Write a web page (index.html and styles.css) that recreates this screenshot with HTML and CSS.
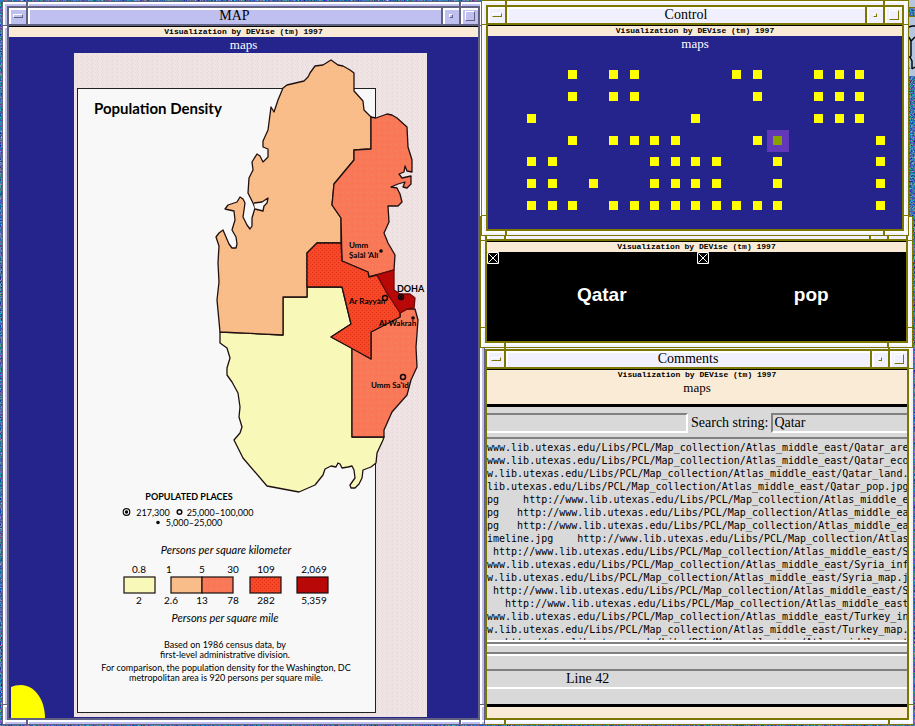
FILE: index.html
```html
<!DOCTYPE html>
<html lang="en">
<head>
<meta charset="utf-8">
<title>DEVise maps</title>
<link rel="stylesheet" href="styles.css">
</head>
<body>
<main class="desktop">
  <svg class="wallpaper" aria-hidden="true">
    <filter id="grain" x="0" y="0" width="100%" height="100%" color-interpolation-filters="sRGB">
      <feTurbulence type="fractalNoise" baseFrequency="0.7" numOctaves="2" seed="4"/>
      <feColorMatrix values="1.4 0 0 0 -0.45  0 1.2 0 0 -0.15  0 0 1 0 0.18  0 0 0 0 1"/>
    </filter>
    <rect width="100%" height="100%" filter="url(#grain)"/>
  </svg>
  <svg class="desk-icon" viewBox="0 0 7 76" aria-hidden="true">
    <path fill="#b4c6e0" d="M0 0h7v8H0zM0 17h7v59H0z"/>
    <path fill="#7b7700" d="M0 7h7v1H0zM0 16h7v1H0z"/>
    <path fill="none" stroke="#000" stroke-width="1.4" d="M1 27l3-1h3M1 37l2 4 4-4M3 41v15l-3 2M2 57l2 4v8M0 66l1 3M4 69l3-2"/>
  </svg>

  <section class="window window-comments">
    <header class="titlebar">
      <button class="tb-button" aria-label="Window menu"><span class="glyph glyph-menu"></span></button>
      <h2 class="title">Comments</h2>
      <button class="tb-button" aria-label="Minimize"><span class="glyph glyph-min"></span></button>
      <button class="tb-button" aria-label="Maximize"><span class="glyph glyph-max"></span></button>
    </header>
    <div class="body cream">
      <p class="banner">Visualization by DEVise (tm) 1997</p>
      <h3 class="view-name">maps</h3>
      <div class="browser">
        <form class="search">
          <input class="field field-left" type="text" aria-label="Location">
          <label for="find">Search string:</label>
          <input class="field field-find" id="find" type="text" value="Qatar">
        </form>
<pre class="listing">www.lib.utexas.edu/Libs/PCL/Map_collection/Atlas_middle_east/Qatar_are
www.lib.utexas.edu/Libs/PCL/Map_collection/Atlas_middle_east/Qatar_eco
w.lib.utexas.edu/Libs/PCL/Map_collection/Atlas_middle_east/Qatar_land.
lib.utexas.edu/Libs/PCL/Map_collection/Atlas_middle_east/Qatar_pop.jpg
pg    http://www.lib.utexas.edu/Libs/PCL/Map_collection/Atlas_middle_e
pg   http://www.lib.utexas.edu/Libs/PCL/Map_collection/Atlas_middle_ea
pg   http://www.lib.utexas.edu/Libs/PCL/Map_collection/Atlas_middle_ea
imeline.jpg    http://www.lib.utexas.edu/Libs/PCL/Map_collection/Atlas
 http://www.lib.utexas.edu/Libs/PCL/Map_collection/Atlas_middle_east/S
www.lib.utexas.edu/Libs/PCL/Map_collection/Atlas_middle_east/Syria_inf
w.lib.utexas.edu/Libs/PCL/Map_collection/Atlas_middle_east/Syria_map.j
 http://www.lib.utexas.edu/Libs/PCL/Map_collection/Atlas_middle_east/S
   http://www.lib.utexas.edu/Libs/PCL/Map_collection/Atlas_middle_east
www.lib.utexas.edu/Libs/PCL/Map_collection/Atlas_middle_east/Turkey_in
w.lib.utexas.edu/Libs/PCL/Map_collection/Atlas_middle_east/Turkey_map.
   http://www.lib.utexas.edu/Libs/PCL/Map_collection/Atlas_middle_east</pre>
        <div class="hscroll"></div>
        <p class="status">Line 42</p>
      </div>
    </div>
  </section>

  <section class="window window-map">
    <header class="titlebar">
      <button class="tb-button" aria-label="Window menu"><span class="glyph glyph-menu"></span></button>
      <h2 class="title">MAP</h2>
      <button class="tb-button" aria-label="Minimize"><span class="glyph glyph-min"></span></button>
      <button class="tb-button" aria-label="Maximize"><span class="glyph glyph-max"></span></button>
    </header>
    <div class="body navy">
      <p class="banner">Visualization by DEVise (tm) 1997</p>
      <h3 class="view-name">maps</h3>
      <svg class="plot" viewBox="9 53 469 665" role="img" aria-label="Population density of Qatar">
        <defs>
          <pattern id="paper" width="5" height="4" patternUnits="userSpaceOnUse">
            <rect width="5" height="4" fill="#f0e4e4"/>
            <path fill="#e6dada" d="M0 0h1v1H0zM2 0h1v2H2zM1 2h1v1H1zM3 3h1v1H3z"/>
          </pattern>
          <pattern id="orange" width="4" height="4" patternUnits="userSpaceOnUse">
            <rect width="4" height="4" fill="#f8c088"/>
            <path fill="#f8b488" d="M0 0h1v1H0zM2 2h1v1H2zM1 3h1v1H1z"/>
          </pattern>
          <pattern id="coral" width="6" height="6" patternUnits="userSpaceOnUse">
            <rect width="6" height="6" fill="#f87858"/>
            <path fill="#f88860" d="M0 0h1v1H0z"/>
            <path fill="#f86c50" d="M4 3h1v1H4z"/>
          </pattern>
          <pattern id="red" width="4" height="4" patternUnits="userSpaceOnUse">
            <rect width="4" height="4" fill="#f84828"/>
            <path fill="#d83018" d="M0 0h1v1H0zM2 2h1v1H2z"/>
          </pattern>
        </defs>
        <rect x="74" y="53" width="353" height="664" fill="url(#paper)"/>
        <rect x="77.500" y="88.500" width="298" height="624" fill="#f8f8f8" stroke="#202020"/>
        <g stroke="#201010" stroke-width="1.300" stroke-linejoin="round">
          <path fill="#f8f8b8" d="M220 332L283 335V297H307V287H342L351 324L331 337L352 348V437H384L383 440L377 453L376 463L371 467L363 470L362 478L359 484L355 488L351 488L350 485L355 478L354 470L352 466L348 467L342 468L340 464L338 463L336 467L331 466L325 469L323 475L315 485L299 492L267 486L243 458L234 440L240 433L242 427L239 417L240 407L238 393L232 382L227 375L227 368L230 358L227 348L220 343Z"/>
          <path fill="url(#orange)" d="M283 88L287 85L304 81L308 77L310 73L315 66L323 65L331 60L338 65L343 66L350 70L354 73V91L363 101L364 110L371 117V149L354 150V160L334 184L332 205L341 218V243H317L307 253V297H283V335L220 332L217 300L219 282L218 263L219 246L216 237L219 233L223 230L226 237L229 244L232 248H236L237 244L236 237L232 230L235 220L234 211L225 209L228 205L237 202L240 197L243 199L245 203L243 217L247 225L250 229L252 226L252 218L255 208L253 203L248 193L249 178L253 170L252 162L257 154L260 156L263 162L268 157L268 149L263 147V141L268 130L271 107L274 112L278 100Z"/>
          <path fill="#f8f8f8" d="M254 203L262 202L268 198L267 203L264 206L263 211L255 209"/>
          <path fill="url(#coral)" d="M371 117L376 118L387 114L392 115L397 118L407 127L408 147L412 160V172L407 171L405 166L404 172L399 174L402 178L411 176V184L407 188L403 187L405 182L398 184L391 187L397 188L400 194L402 202L398 206H388L389 222L384 233L388 243L395 255L394 270L369 277L368 272L342 261L341 218L332 205L334 184L354 160V150L371 149Z"/>
          <path fill="url(#coral)" d="M371 332L400 317V313L407 309H415L418 320L416 347L417 367L411 380L407 395L392 412L384 430V437H352V348L371 359Z"/>
          <path fill="url(#red)" d="M341 243L342 261L368 272L369 277L377 275L387 293L400 310V317L371 332V359L331 337L351 324L342 287H307V253L317 243Z"/>
          <path fill="#b80808" stroke="#700808" d="M377 275L394 270V290L400 294H410L415 298L414 308L407 309L400 313L387 293Z"/>
        </g>
        <g fill="none" stroke="#100808" stroke-width="1.500">
          <circle cx="385" cy="298" r="2.500"/><circle cx="403" cy="377" r="2.500"/><circle cx="401" cy="297" r="2.500"/>
          <circle cx="126.500" cy="512" r="3.300" stroke-width="1.200"/><circle cx="179.500" cy="512" r="2.300"/>
        </g>
        <g fill="#100808">
          <circle cx="381" cy="251" r="1.800"/><circle cx="413" cy="318" r="1.800"/><circle cx="401" cy="297" r="1.500"/>
          <circle cx="126.500" cy="512" r="1.700"/><circle cx="158" cy="522.500" r="1.800"/>
        </g>
        <g class="place">
          <text x="349" y="248">Umm</text><text x="349" y="258">Ṣalāl 'Alī</text>
          <text x="349" y="304">Ar Rayyān</text><text x="379" y="326">Al Wakrah</text>
          <text x="371" y="388">Umm Sa'īd</text><text class="capital" x="397" y="292">DOHA</text>
        </g>
        <text class="map-title" x="94" y="114">Population Density</text>
        <g class="legend">
          <text class="strong" x="189" y="500">POPULATED PLACES</text>
          <text x="153" y="516">217,300</text><text x="220" y="516">25,000–100,000</text><text x="194" y="526">5,000–25,000</text>
          <text class="caption" x="226" y="554">Persons per square kilometer</text>
          <text class="caption" x="225" y="622">Persons per square mile</text>
          <g class="value">
            <text x="139" y="573">0.8</text><text x="169" y="573">1</text><text x="202" y="573">5</text><text x="233" y="573">30</text><text x="266" y="573">109</text><text x="314" y="573">2,069</text>
            <text x="139" y="604">2</text><text x="171" y="604">2.6</text><text x="202" y="604">13</text><text x="233" y="604">78</text><text x="266" y="604">282</text><text x="314" y="604">5,359</text>
          </g>
          <text x="225" y="648">Based on 1986 census data, by</text>
          <text x="225" y="658">first-level administrative division.</text>
          <text x="226" y="671">For comparison, the population density for the Washington, DC</text>
          <text x="226" y="681">metropolitan area is 920 persons per square mile.</text>
        </g>
        <g stroke="#181010" stroke-width="1.200">
          <rect x="124" y="577" width="31" height="16" fill="#f8f8b8"/>
          <rect x="171" y="577" width="31" height="16" fill="url(#orange)"/>
          <rect x="202" y="577" width="31" height="16" fill="url(#coral)"/>
          <rect x="250" y="577" width="31" height="16" fill="url(#red)"/>
          <rect x="297" y="577" width="31" height="16" fill="#b80808"/>
        </g>
        <path fill="#ff0" d="M11 718V687Q15 685 21 685C34 685 45 699 45 718Z"/>
      </svg>
    </div>
  </section>

  <section class="window window-view">
    <header class="titlebar">
      <span class="tb-button"></span>
      <span class="title"></span>
      <span class="tb-button"></span>
      <span class="tb-button"></span>
    </header>
    <div class="body black">
      <p class="banner">Visualization by DEVise (tm) 1997</p>
      <div class="cells">
        <div class="cell">
          <svg class="cross" viewBox="0 0 12 12" aria-hidden="true"><path fill="none" stroke="#fff" d="M.5.5h11v11H.5zM1.500 1.500l9 9M10.500 1.500l-9 9"/></svg>
          <strong class="cell-text">Qatar</strong>
        </div>
        <div class="cell">
          <svg class="cross" viewBox="0 0 12 12" aria-hidden="true"><path fill="none" stroke="#fff" d="M.5.5h11v11H.5zM1.500 1.500l9 9M10.500 1.500l-9 9"/></svg>
          <strong class="cell-text">pop</strong>
        </div>
      </div>
    </div>
  </section>

  <section class="window window-control">
    <header class="titlebar">
      <button class="tb-button" aria-label="Window menu"><span class="glyph glyph-menu"></span></button>
      <h2 class="title">Control</h2>
      <button class="tb-button" aria-label="Minimize"><span class="glyph glyph-min"></span></button>
      <button class="tb-button" aria-label="Maximize"><span class="glyph glyph-max"></span></button>
    </header>
    <div class="body navy">
      <p class="banner">Visualization by DEVise (tm) 1997</p>
      <h3 class="view-name">maps</h3>
      <svg class="plot" viewBox="488 52 414 177" role="img" aria-label="Available maps">
        <defs><path id="d" d="M0 0h9v9H0z"/></defs>
        <g fill="#ff0">
          <use href="#d" x="568" y="70"/><use href="#d" x="609" y="70"/><use href="#d" x="630" y="70"/><use href="#d" x="732" y="70"/><use href="#d" x="753" y="70"/><use href="#d" x="814" y="70"/><use href="#d" x="835" y="70"/><use href="#d" x="855" y="70"/>
          <use href="#d" x="568" y="92"/><use href="#d" x="609" y="92"/><use href="#d" x="630" y="92"/><use href="#d" x="753" y="92"/><use href="#d" x="814" y="92"/><use href="#d" x="835" y="92"/><use href="#d" x="855" y="92"/>
          <use href="#d" x="527" y="114"/><use href="#d" x="691" y="114"/><use href="#d" x="814" y="114"/><use href="#d" x="835" y="114"/><use href="#d" x="855" y="114"/>
          <use href="#d" x="568" y="136"/><use href="#d" x="609" y="136"/><use href="#d" x="630" y="136"/><use href="#d" x="650" y="136"/><use href="#d" x="671" y="136"/><use href="#d" x="753" y="136"/><use href="#d" x="876" y="136"/>
          <use href="#d" x="527" y="157"/><use href="#d" x="548" y="157"/><use href="#d" x="650" y="157"/><use href="#d" x="671" y="157"/><use href="#d" x="691" y="157"/><use href="#d" x="712" y="157"/><use href="#d" x="773" y="157"/><use href="#d" x="876" y="157"/>
          <use href="#d" x="527" y="179"/><use href="#d" x="548" y="179"/><use href="#d" x="589" y="179"/><use href="#d" x="650" y="179"/><use href="#d" x="671" y="179"/><use href="#d" x="691" y="179"/><use href="#d" x="712" y="179"/><use href="#d" x="773" y="179"/><use href="#d" x="876" y="179"/>
          <use href="#d" x="527" y="201"/><use href="#d" x="548" y="201"/><use href="#d" x="568" y="201"/><use href="#d" x="609" y="201"/><use href="#d" x="630" y="201"/><use href="#d" x="650" y="201"/><use href="#d" x="671" y="201"/><use href="#d" x="691" y="201"/><use href="#d" x="712" y="201"/><use href="#d" x="732" y="201"/><use href="#d" x="753" y="201"/><use href="#d" x="773" y="201"/><use href="#d" x="876" y="201"/>
        </g>
        <path fill="#6038b8" d="M767 130h22v22h-22z"/>
        <use href="#d" x="773" y="136" fill="#88a000"/>
      </svg>
    </div>
  </section>
</main>
</body>
</html>
```
FILE: styles.css
```css
* {
  box-sizing: border-box;
}

body {
  margin: 0;
  font-family: "Liberation Serif", serif;
  font-size: 14px;
  color: #000;
}

h2, h3, p, pre {
  margin: 0;
  font-weight: normal;
}

.desktop {
  position: relative;
  height: 100vh;
  overflow: hidden;
  background: #4878a8;
}

.wallpaper {
  position: absolute;
  width: 100%;
  height: 100%;
}

.desk-icon {
  position: absolute;
  top: 0;
  right: 0;
  width: 7px;
}

/* Window frame: outer line, raised strip with corner notches, inner line */
.window {
  --face: #f0f0ff;
  --line: #7b7700;
  --notch: linear-gradient(90deg, var(--line) 2px, #fff 2px);
  --notch-v: linear-gradient(var(--line) 1px, #fff 1px);
  position: absolute;
  display: flex;
  flex-direction: column;
  padding: 4px;
  border: 1px solid var(--line);
  background:
    var(--notch) 23px 0 / 3px 100% no-repeat,
    var(--notch) right 22px top 0 / 3px 100% no-repeat,
    var(--notch-v) 0 23px / 100% 3px no-repeat,
    var(--notch-v) 0 calc(100% - 17px) / 100% 3px no-repeat,
    linear-gradient(#fff, #fff) 0 0 / 100% 2px no-repeat,
    linear-gradient(#fff, #fff) 0 0 / 2px 100% no-repeat,
    linear-gradient(#fff, #fff) right 2px top 0 / 2px 100% no-repeat,
    linear-gradient(#fff, #fff) 0 calc(100% - 2px) / 100% 2px no-repeat,
    var(--face);
}

.window-map {
  --face: #c0c0f0;
  --line: #606080;
  top: 1px;
  bottom: 1px;
  left: 2px;
  width: 483px;
}

.window-control {
  top: 0;
  left: 481px;
  right: 6px;
  height: 236px;
}

.window-view {
  top: 216px;
  left: 480px;
  right: 2px;
  height: 132px;
}

.window-comments {
  top: 344px;
  bottom: 1px;
  left: 480px;
  right: 1px;
}

.titlebar {
  display: grid;
  grid-template-columns: 17px 1fr 16px 17px;
  gap: 2px;
  border: 2px solid var(--line);
  background: var(--line);
}

.title,
.tb-button {
  height: 16px;
  background: var(--face);
  box-shadow: inset 1px 1px #fff, inset 2px 2px #fff;
}

.title {
  font-size: 14px;
  line-height: 16px;
  text-align: center;
}

.tb-button {
  display: grid;
  place-items: center;
  padding: 0;
  border: 0;
}

.glyph {
  border: 1px solid;
  border-color: #fff var(--line) var(--line) #fff;
}

.glyph-menu {
  width: 10px;
  height: 4px;
}

.glyph-min {
  width: 4px;
  height: 4px;
}

.glyph-max {
  width: 10px;
  height: 10px;
}

.body {
  flex: 1;
  min-height: 0;
  display: flex;
  flex-direction: column;
  overflow: hidden;
  border: 2px solid var(--line);
  border-width: 0 2px 2px;
}

.navy {
  background: #24248c;
  color: #fff;
}

.black {
  background: #000;
  color: #fff;
}

.cream {
  background: #faebd7;
}

.banner {
  flex: none;
  height: 11px;
  border-top: 1px solid #000;
  background: #faebd7;
  color: #000;
  font: bold 8px/10px "Liberation Mono", monospace;
  text-align: center;
}

.view-name {
  flex: none;
  font-size: 13px;
  line-height: 16px;
  text-align: center;
}

.plot {
  display: block;
  width: 100%;
}

.map-title {
  font: bold 15px Lato, sans-serif;
}

.place {
  font: bold 8px Lato, sans-serif;
}

.capital {
  font-size: 9px;
}

.legend {
  font: 9px Lato, sans-serif;
  text-anchor: middle;
}

.strong {
  font-weight: bold;
}

.caption {
  font-size: 11px;
  font-style: italic;
}

.value {
  font-size: 10px;
}

.cells {
  flex: 1;
  display: grid;
  grid-template-columns: 1fr 1fr;
}

.cell {
  display: grid;
  grid-template-columns: 12px 1fr;
  column-gap: 8px;
}

.cross {
  width: 12px;
  height: 12px;
}

.cell-text {
  place-self: center;
  padding-bottom: 4px;
  font: bold 19px "Liberation Sans", sans-serif;
}

.browser {
  flex: 1;
  min-height: 0;
  display: flex;
  flex-direction: column;
  margin: 8px 0 11px;
  border: solid #000;
  border-width: 3px 0;
  background: #d9d9d9;
}

.search {
  display: grid;
  grid-template-columns: 201px auto 1fr;
  align-items: center;
  column-gap: 3px;
  padding: 6px 0 4px;
}

.field {
  min-width: 0;
  height: 20px;
  padding: 0 1px;
  border: 2px solid;
  border-color: #808080 #fff #fff #808080;
  background: #d9d9d9;
  font: 14px "Liberation Serif", serif;
}

.field-left {
  border-left: 0;
}

.field-find {
  border-right: 0;
}

.listing {
  flex: 1;
  min-height: 0;
  overflow: hidden;
  padding-top: 2px;
  border: solid;
  border-width: 2px 0;
  border-color: #808080 #d9d9d9 #fff;
  font: 10px/13px "DejaVu Sans Mono", monospace;
}

.hscroll {
  flex: none;
  height: 14px;
  border: solid;
  border-width: 2px 0;
  border-color: #808080 #d9d9d9 #fff;
  box-shadow: inset 0 2px #fff, inset 0 -2px #808080;
}

.status {
  flex: none;
  margin: 13px 0 15px;
  padding-left: 79px;
  border: solid;
  border-width: 2px 0;
  border-color: #808080 #d9d9d9 #fff;
  line-height: 16px;
}
```
